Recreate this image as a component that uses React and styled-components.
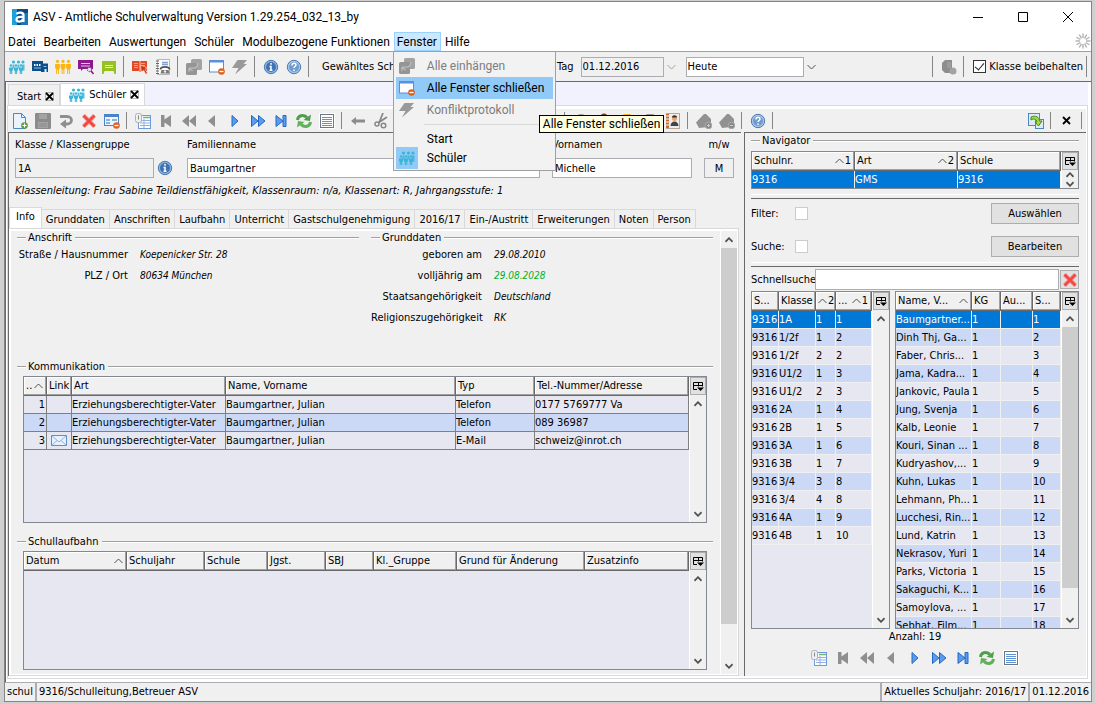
import React from "react";
import styled, { createGlobalStyle, css } from "styled-components";

const UI = `"DejaVu Sans Condensed", "DejaVu Sans", "Noto Sans", sans-serif`;
const CHROME = `Roboto, "Open Sans", sans-serif`;

const c = {
  face: "#f0f0f0",
  dark: "#696969",
  mid: "#a0a0a0",
  light: "#d9d9d9",
  field: "#abadb3",
  box: "#828790",
  table: "#e7e7f1",
  stripe: "#ccd9f6",
  select: "#0078d7",
  hot: "#91c9f7",
};

const Global = createGlobalStyle`
  *, *::before, *::after { box-sizing: border-box; }
  html, body { margin: 0; }
  body { background: #cfcfcf; color: #000; font: 11px/14px ${UI}; }
  button, input, select { font: inherit; color: inherit; margin: 0; border-radius: 0; }
  h1, h2, p, dl, dd, dt { margin: 0; font-size: inherit; font-weight: inherit; }
`;

/* ---------- frame ---------- */
const Desktop = styled.div`
  height: 100vh;
  min-height: 640px;
  padding: 1px 3px 2px 4px;
  display: flex;
`;
const Frame = styled.div`
  flex: 1;
  min-width: 0;
  display: flex;
  flex-direction: column;
  background: ${c.face};
  border: 1px solid #858585;
`;
const TitleBar = styled.header`
  height: 30px;
  flex: none;
  display: flex;
  align-items: center;
  padding: 0 15px 0 7px;
  gap: 5px;
  background: #fff;
  font: 12px/16px ${CHROME};
  h1 { flex: 1; }
`;
const WindowButtons = styled.div`
  display: flex;
  gap: 29px;
`;
const PlainButton = styled.button`
  display: flex;
  align-items: center;
  justify-content: center;
  border: 0;
  padding: 0;
  background: none;
`;
const MenuBar = styled.nav`
  height: 20px;
  flex: none;
  display: flex;
  background: #fff;
  border-bottom: 1px solid ${c.mid};
  font: 12px/16px ${CHROME};
  > svg { margin: 1px 0 0 auto; }
`;
const MenuHolder = styled.div`
  position: relative;
  display: flex;
`;
const MenuButton = styled.button`
  padding: 0 3px;
  white-space: nowrap;
  border: 1px solid ${(p) => (p.$open ? "#99d1ff" : "transparent")};
  background: ${(p) => (p.$open ? "#cce8ff" : "transparent")};
  &:first-child { padding-left: 2px; }
`;
const Popup = styled.div`
  position: absolute;
  z-index: 5;
  left: -1px;
  top: 19px;
  width: 163px;
  height: 120px;
  padding: 3px 2px 2px;
  background: #f2f2f2;
  border: 1px solid ${c.mid};
`;
const PopupItem = styled.button`
  display: flex;
  align-items: center;
  width: 100%;
  height: ${(p) => (p.$short ? 19 : 22)}px;
  padding: 0;
  border: 0;
  text-align: left;
  background: ${(p) => (p.$hot ? c.hot : "none")};
  color: ${(p) => (p.disabled ? "#7d7d7d" : "#000")};
`;
const PopupIcon = styled.span`
  display: flex;
  align-items: center;
  justify-content: center;
  width: 22px;
  height: 22px;
  margin-right: 9px;
  background: ${(p) => (p.$on ? c.hot : "none")};
`;
const PopupRule = styled.hr`
  margin: 3px 3px 4px 28px;
  border: 0;
  border-top: 1px solid ${c.light};
`;
const Tooltip = styled.div`
  position: absolute;
  z-index: 6;
  left: 145px;
  top: 83px;
  height: 18px;
  padding: 0 3px;
  white-space: nowrap;
  background: #ffffe1;
  border: 1px solid #000;
`;

/* ---------- toolbars ---------- */
const Toolbar = styled.div`
  display: flex;
  align-items: center;
  flex: none;
  height: ${(p) => p.$h}px;
  padding-left: ${(p) => p.$pad || 0}px;
  white-space: nowrap;
  background: ${c.face};
`;
const ToolButton = styled(PlainButton)`
  flex: none;
  width: ${(p) => p.$w || 23}px;
  height: 20px;
`;
const Divider = styled.span`
  flex: none;
  width: 1px;
  height: ${(p) => p.$h || 17}px;
  margin: 0 4px 0 3px;
  background: #868686;
`;
const Push = styled.span`
  flex: 1;
`;
const YearLabel = styled.span`
  width: 244px;
  padding-left: 9px;
  overflow: hidden;
`;
const Pick = styled.span`
  display: flex;
  align-items: center;
  gap: 3px;
  margin: 0 3px 0 7px;
  select {
    appearance: none;
    width: ${(p) => p.$w}px;
    height: 20px;
    padding: 0 1px;
    border: 1px solid ${c.field};
    background: ${(p) => (p.$flat ? c.face : "#fff")};
  }
`;
const Check = styled.label`
  display: flex;
  align-items: center;
  gap: 3px;
  margin-left: 5px;
`;
const Box = styled.input`
  appearance: none;
  position: relative;
  width: 13px;
  height: 13px;
  background: #fff;
  border: 1px solid ${(p) => (p.$strong ? "#333" : "#ccc")};
  &:checked::after {
    content: "";
    position: absolute;
    left: 3px;
    top: 0;
    width: 5px;
    height: 9px;
    border: solid #222;
    border-width: 0 1px 1px 0;
    transform: rotate(40deg);
  }
`;

/* ---------- document area ---------- */
const Main = styled.main`
  flex: 1;
  min-height: 0;
  display: flex;
  flex-direction: column;
  padding: 0 3px 3px 1px;
  background: #fff;
  border: solid ${c.dark};
  border-width: 1px 0 0 1px;
`;
const DocTabs = styled.div`
  flex: none;
  height: 23px;
  display: flex;
  align-items: flex-end;
  padding-left: 1px;
  background: #f2f2ff;
`;
const DocTab = styled.div`
  display: flex;
  align-items: center;
  gap: 4px;
  height: ${(p) => (p.$on ? 22 : 21)}px;
  padding: ${(p) => (p.$on ? 0 : 3)}px 5px 0 8px;
  background: ${(p) => (p.$on ? "#fff" : c.face)};
  border: 1px solid ${c.light};
  border-bottom: 0;
`;
const Sheet = styled.div`
  flex: 1;
  min-height: 0;
  display: flex;
  flex-direction: column;
  padding: 3px 1px 2px 0;
  border: 1px solid ${c.light};
  background: #fff;
`;
const Panes = styled.div`
  flex: 1;
  min-height: 0;
  display: flex;
  gap: 3px;
  background: ${c.face};
`;
const LeftPane = styled.section`
  flex: 1;
  min-width: 0;
  display: flex;
  flex-direction: column;
  border: solid ${c.dark};
  border-width: 1px 0 0 1px;
`;
const Form = styled.form`
  display: flex;
  align-items: flex-end;
  padding: 5px 7px 0 6px;
`;
const Field = styled.div`
  display: flex;
  flex-direction: column;
  gap: 6px;
  flex: ${(p) => (p.$w ? "none" : 1)};
  width: ${(p) => (p.$w ? `${p.$w}px` : "auto")};
  margin-right: ${(p) => p.$after || 0}px;
  label { text-align: ${(p) => (p.$center ? "center" : "left")}; white-space: nowrap; }
  input {
    width: 100%;
    height: 20px;
    padding: 0 2px;
    text-align: ${(p) => (p.$center ? "center" : "left")};
    border: 1px solid ${c.field};
    background: ${(p) => (p.$flat ? c.face : "#fff")};
  }
`;
const FormIcon = styled(PlainButton)`
  width: 22px;
  height: 20px;
  margin-right: 11px;
`;
const ClassNote = styled.p`
  padding: 6px 6px 9px;
  font-style: italic;
  white-space: nowrap;
`;
const Tabs = styled.div`
  display: flex;
  align-items: flex-end;
  height: 21px;
`;
const Tab = styled.button`
  height: ${(p) => (p.$on ? 21 : 19)}px;
  padding: ${(p) => (p.$on ? "0 6px 3px" : "1px 4px 0")};
  white-space: nowrap;
  background: ${(p) => (p.$on ? "#fff" : c.face)};
  border: solid ${c.light};
  border-width: 1px 1px 0 ${(p) => (p.$on ? 1 : 0)}px;
`;
const TabPanel = styled.div`
  flex: 1;
  min-height: 0;
  display: flex;
  margin-right: 2px;
  border: 1px solid ${c.light};
  border-left-color: #fff;
  padding: 2px 1px 1px;
  background: #fff;
`;
const Scroller = styled.div`
  flex: 1;
  min-width: 0;
  display: flex;
  flex-direction: column;
  padding: 0 7px 4px 6px;
  background: ${c.face};
`;
const Columns = styled.div`
  display: flex;
  gap: 12px;
  padding-bottom: 32px;
`;
const Group = styled.section`
  flex: ${(p) => (p.$grow ? 1 : "none")};
  min-width: 0;
  min-height: 0;
  display: flex;
  flex-direction: column;
`;
const LowerGroup = styled(Group)`
  flex: 1;
  margin-top: 12px;
`;
const GroupTitle = styled.h2`
  display: flex;
  align-items: center;
  gap: 2px;
  height: 13px;
  margin-bottom: ${(p) => p.$gap || 0}px;
  white-space: nowrap;
  &::before, &::after {
    content: "";
    width: 9px;
    height: 2px;
    border-top: 1px solid ${c.mid};
    background: #fff;
  }
  &::after { flex: 1; margin-left: 1px; }
`;
const Facts = styled.dl`
  display: grid;
  grid-template-columns: 111px 1fr;
  column-gap: 12px;
  grid-auto-rows: 21px;
  align-items: center;
  white-space: nowrap;
  dt { text-align: right; }
  dd { font-style: italic; font-size: 10px; }
`;
const Green = styled.dd`
  color: #00b020;
`;

/* ---------- tables ---------- */
const TableBox = styled.div`
  display: flex;
  flex: ${(p) => (p.$h ? "none" : p.$w ? `0 0 ${p.$w}px` : 1)};
  height: ${(p) => (p.$h ? `${p.$h}px` : "auto")};
  min-height: 0;
  min-width: 0;
  margin: 0 ${(p) => p.$inset || 0}px;
  border: 1px solid ${c.box};
  background: ${c.table};
  overflow: hidden;
`;
const TableArea = styled.div`
  flex: 1;
  min-width: 0;
  overflow: hidden;
`;
const Grid = styled.table`
  width: 100%;
  table-layout: fixed;
  border-collapse: separate;
  border-spacing: 0;
  white-space: nowrap;
`;
const Col = styled.col`
  width: ${(p) => (p.$w ? `${p.$w}px` : "auto")};
`;
const Th = styled.th`
  height: 19px;
  padding: 0 3px 0 2px;
  font-weight: normal;
  text-align: left;
  background: ${c.face};
  border: solid ${c.dark};
  border-width: 0 1px 1px 0;
  box-shadow: inset -1px -1px ${c.mid}, inset 1px 1px #fff;
  overflow: hidden;
`;
const HeadText = styled.span`
  display: flex;
  align-items: center;
  gap: 1px;
  svg { margin-left: auto; flex: none; }
`;
const Td = styled.td`
  height: 18px;
  padding: 0 1px 0 0;
  overflow: hidden;
  text-align: ${(p) => (p.$right ? "right" : "left")};
  border: solid ${(p) => (p.$lines ? "#808080" : c.face)};
  border-width: 0 1px 1px 0;
  svg { display: block; margin: auto; }
`;
const Tr = styled.tr`
  ${(p) => p.$stripe && css`background: ${c.stripe};`}
  ${(p) => p.$sel && css`background: ${c.select}; color: #fff;`}
`;
const Side = styled.div`
  flex: none;
  width: 17px;
  display: flex;
  flex-direction: column;
  background: ${c.face};
  border-left: 1px solid #fff;
`;
const ColumnButton = styled(PlainButton)`
  height: 18px;
  flex: none;
  background: #e1e1e1;
  border: 1px solid #adadad;
`;
const Bar = styled.div`
  flex: ${(p) => (p.$wide ? "none" : 1)};
  width: ${(p) => (p.$wide ? "17px" : "auto")};
  min-height: 0;
  display: flex;
  flex-direction: column;
  background: ${c.face};
  border-left: ${(p) => (p.$wide ? "1px solid #fff" : "0")};
`;
const ArrowButton = styled(PlainButton)`
  flex: 0 1 17px;
  min-height: 0;
  overflow: hidden;
`;
const Rail = styled.div`
  flex: 1 1 0;
  min-height: 0;
`;
const Thumb = styled.div`
  height: ${(p) => p.$size}%;
  background: #cdcdcd;
`;

/* ---------- navigator ---------- */
const RightPane = styled.aside`
  flex: 0 0 342px;
  min-height: 0;
  display: flex;
  flex-direction: column;
  padding: 1px 7px 8px 6px;
  border: solid ${c.dark};
  border-width: 1px 0 0 1px;
`;
const Groove = styled.hr`
  width: 100%;
  height: 5px;
  flex: none;
  margin: 5px 0 ${(p) => p.$after}px;
  border: solid #fff;
  border-width: 1px 0;
  border-bottom-color: ${c.dark};
`;
const FilterRow = styled.div`
  display: flex;
  align-items: center;
  height: 21px;
  margin-bottom: ${(p) => p.$after || 0}px;
  label { width: 44px; }
`;
const Push3D = styled.button`
  width: 88px;
  height: 21px;
  margin-left: auto;
  padding: 0;
  background: #e1e1e1;
  border: 1px solid #adadad;
`;
const QuickRow = styled.div`
  display: flex;
  align-items: center;
  gap: 1px;
  margin-bottom: 1px;
  label { width: 63px; white-space: nowrap; }
  input {
    flex: 1;
    min-width: 0;
    height: 21px;
    padding: 0 2px;
    border: 1px solid ${c.field};
    background: #fff;
  }
  button {
    width: 19px;
    height: 19px;
    background: #e1e1e1;
    border: 1px solid #adadad;
  }
`;
const Lists = styled.div`
  flex: 1;
  min-height: 0;
  display: flex;
  gap: 5px;
`;
const Count = styled.p`
  text-align: center;
  margin: 1px 0 4px;
`;
const NavButtons = styled.div`
  display: flex;
  justify-content: center;
`;

/* ---------- status ---------- */
const StatusBar = styled.footer`
  display: flex;
  flex: none;
  height: 19px;
  border-top: 1px solid ${c.field};
  background: ${c.face};
  white-space: nowrap;
`;
const StatusCell = styled.div`
  padding: 2px 2px 0;
  border-right: ${(p) => (p.$last ? 0 : 2)}px solid ${c.field};
  flex: ${(p) => (p.$grow ? 1 : "none")};
`;

/* ---------- icons ---------- */
const Svg = ({ s = 16, children, ...rest }) => (
  <svg width={s} height={s} viewBox="0 0 16 16" fill="none" aria-hidden="true" {...rest}>
    {children}
  </svg>
);
const Kids = ({ color = "#3bb4d8" }) => (
  <Svg>
    <g fill={color}>
      {[4.5, 9.5, 14].map((x) => <circle key={x} cx={x} cy="3" r="1.600" />)}
      {[2, 7, 12].map((x) => (
        <g key={x}>
          <circle cx={x} cy="6.500" r="1.200" />
          <path d={`M${x - 2} 8.500h4v3h-.8v3.500h-1v-2.500h-.4v2.500h-1v-3.500h-.8z`} />
        </g>
      ))}
    </g>
    <path d="M3.500 5.500h2v4h-2zM8.500 5.500h2v4h-2zM13 5.500h2.500v6H13z" fill={color} fillOpacity=".85" />
  </Svg>
);
const Adults = () => (
  <Svg>
    <g fill="#fbb50e">
      {[2.5, 8, 13.5].map((x) => (
        <g key={x}>
          <circle cx={x} cy="2.300" r="1.600" />
          <path d={`M${x - 2.4} 5h4.800v4.500h-1V15h-1v-4h-.8v4h-1V9.500h-1z`} />
        </g>
      ))}
    </g>
  </Svg>
);
const Building = () => (
  <Svg>
    <path d="M0 2h11v2.500h5V13h-1.500v-3h-2v3H9v-1H0z" fill="#0b4f8f" />
    <path d="M2 6h1.500M4.500 6H6M7 6h1.500" stroke="#fff" strokeWidth="2" />
    <path d="M2 9h7M11.500 7.500h3" stroke="#9fbddb" />
  </Svg>
);
const Speech = ({ color, search }) => (
  <Svg>
    <path d={search ? "M0 1h15v9H5l-2 2v-2H0z" : "M1 2h14v13h-1.500l-1-3h-9l-1 3H1z"} fill={color} />
    <path d={search ? "M3 4.500h9M3 7h9" : "M4 6.500h8M4 8.500h8"} stroke="#fff" strokeOpacity=".75" />
    {search && <g><circle cx="11.500" cy="10.500" r="2.200" fill="#e9d5ee" stroke={color} strokeDasharray="1.500 .7" /><path d="M13 12l2.500 3" stroke={color} strokeWidth="1.600" /></g>}
  </Svg>
);
const RedBook = () => (
  <Svg>
    <path d="M0 2h7l1 .7L9 2h6v10H9l-1 1-1-1H0z" fill="#e04a26" />
    <path d="M2 4.500h4M2 6.500h4M2 8.500h4M9 4.500h4M9 6.500h4" stroke="#f0a08c" />
    <path d="M8 3v9" stroke="#f6c4b8" />
    <path d="M8.500 6l7 3-2.500 1.200 2.500 4-1.700 1-2.200-4L9.500 13z" fill="#c93512" stroke="#fff" strokeWidth=".5" />
  </Svg>
);
const PhoneBook = () => (
  <Svg>
    <path d="M2.500.5h12v15h-12z" fill="#fdfdfd" stroke="#b5b5b5" />
    <path d="M1 2h3M1 4.500h3M1 7h3M1 9.500h3M1 12h3M1 14.500h3" stroke="#666" />
    <path d="M7 3.500h6M7 5.500h6" stroke="#7ea3d8" strokeWidth="1.400" />
    <path d="M5.500 10.500c0-3.500 9-3.500 9 0" stroke="#555" strokeWidth="1.800" /><path d="M6.500 11h7l1 3.500h-9z" fill="#777" /><circle cx="10" cy="12.500" r="1.200" fill="#eee" />
  </Svg>
);
const Windows = () => (
  <Svg>
    <rect x="5" y="0" width="11" height="11" rx="1.500" fill="#a3a3a3" />
    <rect x="0" y="4" width="11" height="12" rx="1.500" fill="#959595" />
    <path d="M3 9l3.500 3M3 9v4M3 9h3.500M6 9c4 1 6-2 6-5" stroke="#bdbdbd" strokeWidth="1.200" />
  </Svg>
);
const WindowMinus = () => (
  <Svg>
    <rect x=".5" y="1.500" width="14" height="11.500" fill="#fdfeff" stroke="#5d8fd0" />
    <path d="M1 2.500h13" stroke="#5d8fe0" strokeWidth="2" />
    <circle cx="12.500" cy="12.500" r="3.300" fill="#e0601c" /><path d="M10.500 12.500h4" stroke="#fff" strokeWidth="1.300" />
  </Svg>
);
const Bolt = () => <Svg><path d="M5.500 1H15l-3.500 4H15L3 15.500 6.500 9H0z" fill="#999" /></Svg>;
const Round = ({ help }) => (
  <Svg>
    <circle cx="8" cy="8" r="6.700" fill={help ? "#a9c6e6" : "#8db3dc"} stroke="#4c7ab3" />
    <circle cx="8" cy="8" r="5" fill={help ? "#6f9bcd" : "#3f73b3"} />
    {help
      ? <path d="M6 6.500c0-3 4-3 4-.5 0 1.500-2 1.500-2 3M8 10.500v1.500" stroke="#fff" strokeWidth="1.500" />
      : <path d="M8 4v1.700M6.500 7.500H8v3.500M6.500 11.300h3" stroke="#fff" strokeWidth="1.500" />}
  </Svg>
);
const ServerGray = () => (
  <Svg><path d="M1 4l3-3h7v9l-1 4H4l-3-3z" fill="#8d8d8d" /><path d="M6 4h4M6 6h4M6 8h4" stroke="#aaa" /><circle cx="12" cy="12" r="3.500" fill="#a2a2a2" /></Svg>
);
const NewDoc = () => (
  <Svg>
    <path d="M1.500.5h8l4 4v11h-12z" fill="#e9f3fd" stroke="#4f86c6" /><path d="M9.500.5v4h4" stroke="#4f86c6" />
    <circle cx="12.500" cy="12.500" r="3.300" fill="#5c9a3a" /><path d="M10.500 12.500h4M12.500 10.500v4" stroke="#fff" strokeWidth="1.200" />
  </Svg>
);
const Disk = () => <Svg><rect width="16" height="16" rx="1" fill="#8c8c8c" /><path d="M4 1h8v5H4zM3 9h10v6H3z" fill="#a3a3a3" /><path d="M4 11h8M4 13h8" stroke="#8c8c8c" /></Svg>;
const Undo = () => <Svg><path d="M2 3.500h7c6 0 6 7.500 0 7.500H6" stroke="#8e8e8e" strokeWidth="2.800" /><path d="M8 6.500v9L2 11z" fill="#8e8e8e" /></Svg>;
const RedX = () => <Svg><path d="M2.500 2.500l11 11M13.500 2.500l-11 11" stroke="#f5827c" strokeWidth="4" /><path d="M2.500 2.500l11 11M13.500 2.500l-11 11" stroke="#f04540" strokeWidth="2.200" /></Svg>;
const FormMinus = () => (
  <Svg>
    <rect x=".5" y="1.500" width="14" height="11" fill="#eef5fe" stroke="#4a82cc" /><path d="M1 3h13" stroke="#4a82cc" strokeWidth="2" />
    <path d="M2 7h4M2 10h4M8 7h5" stroke="#6e9bd4" strokeWidth="1.400" />
    <circle cx="12.500" cy="12.500" r="3.300" fill="#e0601c" /><path d="M10.500 12.500h4" stroke="#fff" strokeWidth="1.300" />
  </Svg>
);
const Sheets = () => (
  <Svg>
    <rect x="3.500" y="2.500" width="12" height="13" fill="#fff" stroke="#6f9bdc" />
    <path d="M8 4.500h7" stroke="#79b86c" strokeWidth="1.600" /><path d="M5 7.500h10M5 10h10M5 12.500h10M9 6v9" stroke="#8fb2e2" />
    <rect x=".5" y=".5" width="6" height="9" rx="2" fill="#efefef" stroke="#b0b0b0" /><path d="M3.500 2.500v4" stroke="#888" />
  </Svg>
);
const gray = "#8f8f8f";
const First = () => <Svg><path d="M3 2h3.500v4.500L13 2v12L6.500 9.500V14H3z" fill={gray} /></Svg>;
const Rewind = () => <Svg><path d="M8 2v12L1 8zM15 2v12L8 8z" fill={gray} /></Svg>;
const Back = () => <Svg><path d="M11 2v12L4 8z" fill={gray} /></Svg>;
const blueProps = { fill: "#5b9bee", stroke: "#2468c4", strokeWidth: 1 };
const Play = () => <Svg><path d="M5 2.500v11L11 8z" {...blueProps} /></Svg>;
const Forward = () => <Svg><path d="M1.500 2.500v11L8 8zM8.500 2.500v11L15 8z" {...blueProps} /></Svg>;
const Last = () => <Svg><path d="M3 2.500v11L10 8zM10 2.500h3v11h-3z" {...blueProps} /></Svg>;
const Refresh = () => (
  <Svg>
    <path d="M1.500 7C2 2.500 7 1 11 4.500" stroke="#4da047" strokeWidth="3" /><path d="M15 1.500L14 8 7.500 7z" fill="#4da047" />
    <path d="M14.500 9C14 13.500 9 15 5 11.500" stroke="#5fb058" strokeWidth="3" /><path d="M1 14.500L2 8l6.500 1z" fill="#5fb058" />
  </Svg>
);
const Lines = () => (
  <Svg><rect width="16" height="16" fill="#fff" /><rect x="1.500" y="1.500" width="13" height="13" fill="#fff" stroke="#6d7785" /><path d="M3 4.500h10M3 6.500h10M3 8.500h10M3 10.500h10M3 12.500h10" stroke="#5f93d8" /></Svg>
);
const ArrowBack = () => <Svg><path d="M1 8l5-4v2.500h9v3H6V12z" fill="#8c8c8c" /></Svg>;
const Scissors = () => <Svg><path d="M10 0L6 10M14 4L5 10" stroke="#888" strokeWidth="1.800" /><circle cx="4" cy="11" r="2" stroke="#888" strokeWidth="1.500" /><circle cx="10.500" cy="12.500" r="2.300" stroke="#888" strokeWidth="1.500" /></Svg>;
const Person = () => <Svg><circle cx="8" cy="4" r="3.500" fill="#7a3f1c" /><path d="M2 15c0-9 12-9 12 0z" fill="#444" /></Svg>;
const Blob = ({ color }) => <Svg><path d="M2 3l3-2h6l3 2v12H2z" fill={color} /></Svg>;
const Contacts = () => (
  <Svg>
    <rect x="1.500" y=".5" width="13" height="15" fill="#eee" stroke="#b9a69a" /><path d="M1 1h3v14H1z" fill="#c46a34" /><path d="M1 3h3M1 6h3M1 9h3M1 12h3" stroke="#fff" />
    <circle cx="9.500" cy="5.500" r="2.500" fill="#e8a56c" /><path d="M7 4.500c0-3 5-3 5 0z" fill="#3a2a1e" /><path d="M5.500 13c0-6 8-6 8 0z" fill="#444" />
  </Svg>
);
const GrayHouse = ({ minus }) => (
  <Svg><path d="M0 9.500L8 1h2l5 5v6l-3 2-9 1z" fill="#919191" /><circle cx="12.500" cy="12.500" r="3.300" fill="#8a8a8a" stroke="#aaa" /><path d={minus ? "M11 12.500h3" : "M11 12.500h3M12.500 11v3"} stroke="#ccc" /></Svg>
);
const Detach = () => (
  <Svg>
    <rect x=".5" y=".5" width="11" height="12" fill="#dcebfa" stroke="#4f86c6" /><rect x="7.500" y="6.500" width="8" height="9" fill="#dcebfa" stroke="#4f86c6" />
    <path d="M3 4c5-2 8 0 8.500 4H14l-3.500 5L7 9h2C8.500 6 6 5 3 7z" fill="#a6dc3c" stroke="#3f8c1a" />
  </Svg>
);
const Cross = ({ boxed }) => (
  <svg width="9" height="9" viewBox="0 0 9 9" fill="none" aria-hidden="true">
    {boxed && <path d="M.5.5h8v8h-8z" stroke="#999" strokeOpacity=".7" />}
    <path d="M1 1l7 7M8 1L1 8" stroke="#000" strokeWidth="1.800" />
  </svg>
);
const Envelope = () => (
  <svg width="16" height="11" viewBox="0 0 16 11" fill="none" aria-hidden="true"><path d="M.5.5h15v10H.5z" fill="#e6f1fc" stroke="#5d8fcf" /><path d="M1 1l7 6 7-6M1 10l5-4.500M15 10l-5-4.500" stroke="#8db4e2" /></svg>
);
const ColumnIcon = () => (
  <svg width="11" height="11" viewBox="0 0 11 11" fill="none" aria-hidden="true"><path d="M4 8.500H.5v-7h9v4M.5 4.500h9M5.500 1.500v4" stroke="#000" /><path d="M4 6.500h7L7.500 10z" fill="#000" /></svg>
);
const Chevron = ({ up, w = 9, color = "#505050", bold }) => (
  <svg width={w} height="6" viewBox="0 0 9 6" fill="none" aria-hidden="true">
    <path d={up ? "M.5 5l4-4 4 4" : "M.5 1l4 4 4-4"} stroke={color} strokeWidth={bold ? 2 : 1} />
  </svg>
);
const Spinner = () => (
  <Svg>
    {[...Array(12)].map((_, i) => <path key={i} d="M8 .5v4.500" stroke="#b0b0b0" strokeWidth="1.400" transform={`rotate(${i * 30} 8 8)`} />)}
  </Svg>
);
const Logo = () => (
  <Svg>
    <path d="M0 0h16v16H0z" fill="#0b4a84" /><path d="M0 0h5v16H0z" fill="#1f9fd8" /><path d="M9 4h7v12H9z" fill="#1976b8" />
    <path d="M4.500 5c1.500-2 7-2 7 1v7M11 8c-4-.5-6.500 0-6.500 2.500s5 3 6.500 0" stroke="#fff" strokeWidth="2.200" />
  </Svg>
);

/* ---------- pieces ---------- */
const Tool = ({ label, icon, w }) => <ToolButton type="button" aria-label={label} $w={w}>{icon}</ToolButton>;
const browse = [
  ["Liste", <Sheets />], ["Erster", <First />], ["Zurückblättern", <Rewind />], ["Voriger", <Back />], ["Nächster", <Play />],
  ["Vorblättern", <Forward />], ["Letzter", <Last />], ["Aktualisieren", <Refresh />], ["Einträge", <Lines />],
];
const ScrollBar = ({ thumb, wide }) => (
  <Bar $wide={wide}>
    <ArrowButton type="button" tabIndex={-1} aria-label="Nach oben"><Chevron up w={8} bold /></ArrowButton>
    <Rail>{thumb && <Thumb $size={thumb} />}</Rail>
    <ArrowButton type="button" tabIndex={-1} aria-label="Nach unten"><Chevron w={8} bold /></ArrowButton>
  </Bar>
);
function DataTable({ cols, rows = [], selected, lines, thumb, ...box }) {
  return (
    <TableBox {...box}>
      <TableArea>
        <Grid>
          <colgroup>{cols.map((k, i) => <Col key={i} $w={k.w} />)}</colgroup>
          <thead>
            <tr>
              {cols.map((k, i) => (
                <Th key={i} scope="col"><HeadText>{k.t}{k.sort !== undefined && <Chevron up />}{k.sort}</HeadText></Th>
              ))}
            </tr>
          </thead>
          <tbody>
            {rows.map((r, y) => (
              <Tr key={y} $stripe={y % 2 === 1} $sel={y === selected}>
                {r.map((v, x) => <Td key={x} $lines={lines} $right={cols[x].right}>{v}</Td>)}
              </Tr>
            ))}
          </tbody>
        </Grid>
      </TableArea>
      <Side>
        <ColumnButton type="button" aria-label="Spalten wählen"><ColumnIcon /></ColumnButton>
        <ScrollBar thumb={thumb} />
      </Side>
    </TableBox>
  );
}

/* ---------- data ---------- */
const classes = [
  ["1A", 1, 1], ["1/2f", 1, 2], ["1/2f", 2, 2], ["U1/2", 1, 3], ["U1/2", 2, 3], ["2A", 1, 4], ["2B", 1, 5], ["3A", 1, 6],
  ["3B", 1, 7], ["3/4", 3, 8], ["3/4", 4, 8], ["4A", 1, 9], ["4B", 1, 10],
].map((r) => ["9316", ...r]);
const pupils = [
  "Baumgartner...", "Dinh Thj, Ga...", "Faber, Chris...", "Jama, Kadra...", "Jankovic, Paula", "Jung, Svenja", "Kalb, Leonie",
  "Kouri, Sinan ...", "Kudryashov,...", "Kuhn, Lukas", "Lehmann, Ph...", "Lucchesi, Rin...", "Lund, Katrin", "Nekrasov, Yuri",
  "Parks, Victoria", "Sakaguchi, K...", "Samoylova, ...", "Sebhat, Film...",
].map((n, i) => [n, 1, "", i + 1]);
const tabs = ["Grunddaten", "Anschriften", "Laufbahn", "Unterricht", "Gastschulgenehmigung", "2016/17", "Ein-/Austritt", "Erweiterungen", "Noten", "Person"];
const father = "Erziehungsberechtigter-Vater";
const julian = "Baumgartner, Julian";

export default function App() {
  return (
    <>
      <Global />
      <Desktop>
        <Frame>
          <TitleBar>
            <Logo />
            <h1>ASV - Amtliche Schulverwaltung Version 1.29.254_032_13_by</h1>
            <WindowButtons>
              <PlainButton type="button" aria-label="Minimieren"><Svg><path d="M3 8.500h10" stroke="#000" /></Svg></PlainButton>
              <PlainButton type="button" aria-label="Maximieren"><Svg><path d="M3.500 3.500h9v9h-9z" stroke="#000" /></Svg></PlainButton>
              <PlainButton type="button" aria-label="Schließen"><Svg><path d="M3 3l10 10M13 3L3 13" stroke="#000" /></Svg></PlainButton>
            </WindowButtons>
          </TitleBar>
          <MenuBar>
            {["Datei", "Bearbeiten", "Auswertungen", "Schüler", "Modulbezogene Funktionen"].map((m) => <MenuButton key={m} type="button">{m}</MenuButton>)}
            <MenuHolder>
              <MenuButton type="button" $open>Fenster</MenuButton>
              <Popup>
                <PopupItem type="button" disabled><PopupIcon><Windows /></PopupIcon>Alle einhängen</PopupItem>
                <PopupItem type="button" $hot><PopupIcon><WindowMinus /></PopupIcon>Alle Fenster schließen</PopupItem>
                <PopupItem type="button" disabled><PopupIcon><Bolt /></PopupIcon>Konfliktprotokoll</PopupItem>
                <PopupRule />
                <PopupItem type="button" $short><PopupIcon />Start</PopupItem>
                <PopupItem type="button" $short><PopupIcon $on><Kids /></PopupIcon>Schüler</PopupItem>
              </Popup>
              <Tooltip role="tooltip">Alle Fenster schließen</Tooltip>
            </MenuHolder>
            <MenuButton type="button">Hilfe</MenuButton>
            <Spinner />
          </MenuBar>
          <Toolbar $h={29}>
            <Tool label="Schüler" icon={<Kids />} />
            <Tool label="Schulen" icon={<Building />} />
            <Tool label="Lehrkräfte" icon={<Adults />} />
            <Tool label="Unterricht" icon={<Speech color="#8c1a8c" search />} />
            <Tool label="Klassen" icon={<Speech color="#96c11f" />} />
            <Divider $h={21} />
            <Tool label="Berichte" icon={<RedBook />} />
            <Tool label="Adressbuch" icon={<PhoneBook />} />
            <Divider $h={21} />
            <Tool label="Alle einhängen" icon={<Windows />} />
            <Tool label="Alle Fenster schließen" icon={<WindowMinus />} />
            <Tool label="Konfliktprotokoll" icon={<Bolt />} />
            <Divider $h={21} />
            <Tool label="Information" icon={<Round />} />
            <Tool label="Hilfe" icon={<Round help />} />
            <Divider $h={21} />
            <YearLabel>Gewähltes Schuljahr</YearLabel>
            <label htmlFor="day">Tag</label>
            <Pick $w={83} $flat>
              <select id="day"><option>01.12.2016</option></select>
              <Chevron color="#a0a0a0" />
            </Pick>
            <Pick $w={118}>
              <select aria-label="Zeitraum"><option>Heute</option></select>
              <Chevron />
            </Pick>
            <Push />
            <Divider $h={21} />
            <Tool label="Datenbank" icon={<ServerGray />} />
            <Divider $h={21} />
            <Check><Box type="checkbox" defaultChecked $strong />Klasse beibehalten</Check>
            <Divider $h={21} />
          </Toolbar>
          <Main>
            <DocTabs>
              <DocTab>Start<PlainButton type="button" aria-label="Start schließen"><Cross boxed /></PlainButton></DocTab>
              <DocTab $on><Kids />Schüler<PlainButton type="button" aria-label="Schüler schließen"><Cross boxed /></PlainButton></DocTab>
            </DocTabs>
            <Sheet>
              <Toolbar $h={23}>
                <Tool label="Neu" icon={<NewDoc />} />
                <Tool label="Speichern" icon={<Disk />} />
                <Tool label="Rückgängig" icon={<Undo />} />
                <Tool label="Löschen" icon={<RedX />} />
                <Tool label="Formular leeren" icon={<FormMinus />} />
                <Divider />
                {browse.map(([l, i]) => <Tool key={l} label={l} icon={i} />)}
                <Divider />
                <Tool label="Zurück" icon={<ArrowBack />} />
                <Tool label="Ausschneiden" icon={<Scissors />} />
                <Divider />
                {[1, 2, 3, 4, 5, 6, 7].map((n) => <Tool key={n} label={`Aktion ${n}`} icon={<Blob color="#e7b42c" />} />)}
                <Divider />
                <Tool label="Suchen" icon={<Svg><circle cx="8" cy="8" r="6" stroke="#999" strokeWidth="2" /></Svg>} />
                <Tool label="Person" icon={<Person />} />
                <Tool label="Notiz" icon={<Blob color="#f0b72a" />} />
                <Tool label="Ablage" icon={<Blob color="#999" />} />
                <Tool label="Kontakte" icon={<Contacts />} />
                <Divider />
                <Tool label="Aufnehmen" icon={<GrayHouse />} />
                <Tool label="Entfernen" icon={<GrayHouse minus />} />
                <Divider />
                <Tool label="Hilfe zum Modul" icon={<Round help />} />
                <Divider />
                <Push />
                <Tool label="Abdocken" icon={<Detach />} />
                <Divider />
                <Tool label="Modul schließen" icon={<Cross />} />
                <Divider />
              </Toolbar>
              <Panes>
                <LeftPane>
                  <Form>
                    <Field $w={139} $flat><label htmlFor="klasse">Klasse / Klassengruppe</label><input id="klasse" defaultValue="1A" readOnly /></Field>
                    <FormIcon type="button" aria-label="Info zur Klasse"><Round /></FormIcon>
                    <Field $after={12}><label htmlFor="fam">Familienname</label><input id="fam" defaultValue="Baumgartner" /></Field>
                    <Field $w={140} $after={12}><label htmlFor="vor">Vornamen</label><input id="vor" defaultValue="Michelle" /></Field>
                    <Field $w={30} $flat $center><label htmlFor="mw">m/w</label><input id="mw" defaultValue="M" readOnly /></Field>
                  </Form>
                  <ClassNote>Klassenleitung: Frau Sabine Teildienstfähigkeit, Klassenraum: n/a, Klassenart: R, Jahrgangsstufe: 1</ClassNote>
                  <Tabs>
                    <Tab type="button" $on>Info</Tab>
                    {tabs.map((t) => <Tab key={t} type="button">{t}</Tab>)}
                  </Tabs>
                  <TabPanel>
                    <Scroller>
                      <Columns>
                        <Group $grow>
                          <GroupTitle>Anschrift</GroupTitle>
                          <Facts>
                            <dt>Straße / Hausnummer</dt><dd>Koepenicker Str. 28</dd>
                            <dt>PLZ / Ort</dt><dd>80634 München</dd>
                          </Facts>
                        </Group>
                        <Group $grow>
                          <GroupTitle>Grunddaten</GroupTitle>
                          <Facts>
                            <dt>geboren am</dt><dd>29.08.2010</dd>
                            <dt>volljährig am</dt><Green>29.08.2028</Green>
                            <dt>Staatsangehörigkeit</dt><dd>Deutschland</dd>
                            <dt>Religionszugehörigkeit</dt><dd>RK</dd>
                          </Facts>
                        </Group>
                      </Columns>
                      <Group>
                        <GroupTitle $gap={3}>Kommunikation</GroupTitle>
                        <DataTable
                          $h={147} $inset={6} lines
                          cols={[{ w: 23, t: "..", sort: "", right: true }, { w: 25, t: "Link" }, { w: 154, t: "Art" }, { t: "Name, Vorname" }, { w: 79, t: "Typ" }, { w: 154, t: "Tel.-Nummer/Adresse" }]}
                          rows={[
                            ["1", "", father, julian, "Telefon", "0177 5769777 Va"],
                            ["2", "", father, julian, "Telefon", "089 36987"],
                            ["3", <Envelope key="mail" />, father, julian, "E-Mail", "schweiz@inrot.ch"],
                          ]}
                        />
                      </Group>
                      <LowerGroup>
                        <GroupTitle $gap={3}>Schullaufbahn</GroupTitle>
                        <DataTable
                          $inset={6}
                          cols={[{ w: 103, t: "Datum", sort: "" }, { w: 78, t: "Schuljahr" }, { w: 63, t: "Schule" }, { w: 58, t: "Jgst." }, { w: 48, t: "SBJ" }, { w: 83, t: "Kl._Gruppe" }, { w: 128, t: "Grund für Änderung" }, { t: "Zusatzinfo" }]}
                        />
                      </LowerGroup>
                    </Scroller>
                    <ScrollBar wide thumb={92} />
                  </TabPanel>
                </LeftPane>
                <RightPane>
                  <GroupTitle $gap={4}>Navigator</GroupTitle>
                  <DataTable $h={38} cols={[{ t: "Schulnr.", sort: "1" }, { w: 103, t: "Art", sort: "2" }, { w: 103, t: "Schule" }]} rows={[["9316", "GMS", "9316"]]} selected={0} />
                  <Groove $after={4} />
                  <FilterRow $after={12}><label htmlFor="filter">Filter:</label><Box id="filter" type="checkbox" /><Push3D type="button">Auswählen</Push3D></FilterRow>
                  <FilterRow><label htmlFor="suche">Suche:</label><Box id="suche" type="checkbox" /><Push3D type="button">Bearbeiten</Push3D></FilterRow>
                  <Groove $after={2} />
                  <QuickRow>
                    <label htmlFor="quick">Schnellsuche</label><input id="quick" type="text" />
                    <PlainButton type="button" aria-label="Suche leeren"><RedX /></PlainButton>
                  </QuickRow>
                  <Lists>
                    <DataTable $w={139} selected={0} cols={[{ w: 27, t: "S..." }, { w: 37, t: "Klasse" }, { w: 20, sort: "2" }, { t: "...", sort: "1" }]} rows={classes} />
                    <DataTable selected={0} thumb={92} cols={[{ t: "Name, V...", sort: "" }, { w: 29, t: "KG" }, { w: 32, t: "Au..." }, { w: 28, t: "S..." }]} rows={pupils} />
                  </Lists>
                  <Count>Anzahl: 19</Count>
                  <NavButtons>{browse.map(([l, i]) => <Tool key={l} label={l} icon={i} w={24} />)}</NavButtons>
                </RightPane>
              </Panes>
            </Sheet>
          </Main>
          <StatusBar>
            <StatusCell>schul</StatusCell>
            <StatusCell $grow>9316/Schulleitung,Betreuer ASV</StatusCell>
            <StatusCell>Aktuelles Schuljahr: 2016/17</StatusCell>
            <StatusCell $last>01.12.2016</StatusCell>
          </StatusBar>
        </Frame>
      </Desktop>
    </>
  );
}
